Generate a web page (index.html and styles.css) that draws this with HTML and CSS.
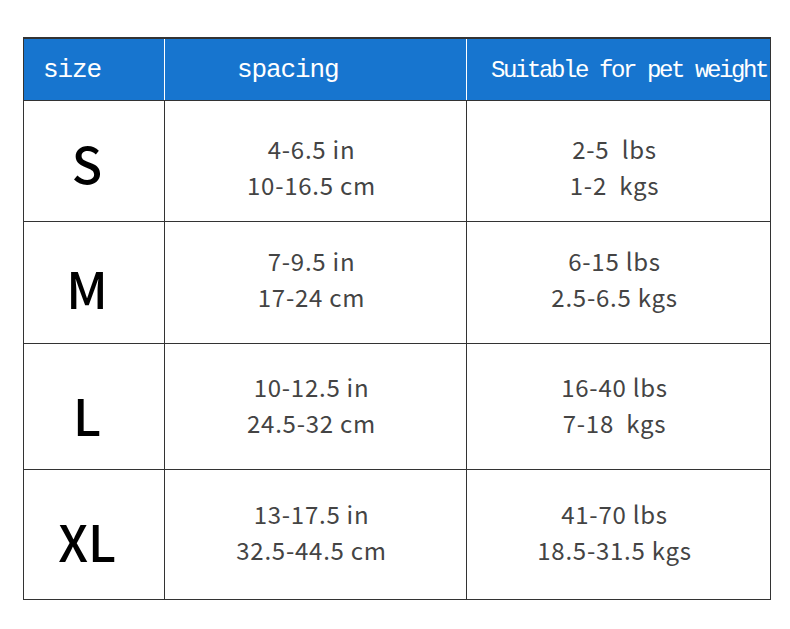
FILE: index.html
```html
<!DOCTYPE html>
<html>
<head>
<meta charset="utf-8">
<link rel="stylesheet" href="styles.css">
</head>
<body>
<div class="chart">
  <div class="row head">
    <div class="cell h-size">size</div>
    <div class="cell h-spacing">spacing</div>
    <div class="cell h-weight">Suitable for pet weight</div>
  </div>
  <div class="row r-s">
    <div class="cell size">S</div>
    <div class="cell val"><span>4-6.5 in</span><span>10-16.5 cm</span></div>
    <div class="cell val"><span>2-5  lbs</span><span>1-2  kgs</span></div>
  </div>
  <div class="row r-m">
    <div class="cell size">M</div>
    <div class="cell val"><span>7-9.5 in</span><span>17-24 cm</span></div>
    <div class="cell val"><span>6-15 lbs</span><span>2.5-6.5 kgs</span></div>
  </div>
  <div class="row r-l">
    <div class="cell size">L</div>
    <div class="cell val"><span>10-12.5 in</span><span>24.5-32 cm</span></div>
    <div class="cell val"><span>16-40 lbs</span><span>7-18  kgs</span></div>
  </div>
  <div class="row r-xl">
    <div class="cell size">XL</div>
    <div class="cell val"><span>13-17.5 in</span><span>32.5-44.5 cm</span></div>
    <div class="cell val"><span>41-70 lbs</span><span>18.5-31.5 kgs</span></div>
  </div>
</div>
</body>
</html>
```

FILE: styles.css
```css
html, body {
  margin: 0;
  padding: 0;
  background: #ffffff;
}

.chart {
  margin: 37px 0 0 23px;
  width: 748px;
  box-sizing: border-box;
  border-top: 2px solid #333333;
  border-left: 1px solid #333333;
  border-right: 1px solid #333333;
  border-bottom: 1px solid #333333;
}

.row {
  display: grid;
  grid-template-columns: 141px 302px 1fr;
  border-bottom: 1px solid #333333;
}

.row:last-child {
  border-bottom: none;
}

.cell {
  border-right: 1px solid #333333;
  box-sizing: border-box;
}

.cell:last-child {
  border-right: none;
}

.head {
  height: 61px;
  background: #1775cf;
}

.head .cell {
  border-right-color: #ffffff;
  color: #ffffff;
  font-family: "Liberation Mono", monospace;
  display: flex;
  align-items: center;
  white-space: pre;
  padding-top: 1px;
}

.h-size {
  font-size: 26px;
  letter-spacing: -1.1px;
  padding-left: 19px;
}

.h-spacing {
  font-size: 26px;
  letter-spacing: -1.1px;
  padding-left: 72px;
}

.h-weight {
  font-size: 24px;
  letter-spacing: -2.4px;
  padding-left: 24px;
}

.r-s { height: 120px; }
.r-m { height: 121px; }
.r-l { height: 125px; }
.r-xl { height: 129px; }

.size {
  display: flex;
  align-items: center;
  justify-content: center;
  padding-right: 14px;
  font-family: "Noto Sans CJK SC", "Noto Sans", sans-serif;
  font-weight: 500;
  font-size: 50px;
  color: #000000;
}

.val {
  display: flex;
  flex-direction: column;
  align-items: center;
  justify-content: center;
  padding-right: 8px;
  font-family: "Noto Sans CJK SC", "Noto Sans", sans-serif;
  font-size: 24px;
  letter-spacing: 0.75px;
  line-height: 36px;
  color: #444444;
  white-space: pre;
}

.r-s .val { padding-top: 12px; }
.r-s .size { padding-top: 1px; }
.r-m .val { padding-bottom: 8px; }
.r-m .size { padding-top: 9px; }
.r-l .val { padding-bottom: 4px; }
.r-l .size { padding-top: 15px; }
.r-xl .val { padding-bottom: 6px; }
.r-xl .size { padding-top: 10px; }
```
